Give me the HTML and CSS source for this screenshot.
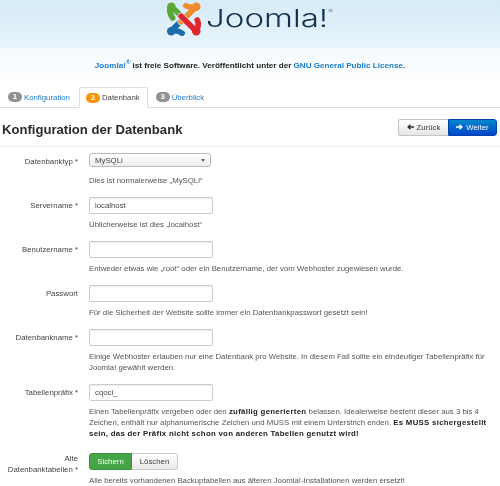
FILE: index.html
```html
<!DOCTYPE html>
<html lang="de">
<head>
    <meta charset="UTF-8">
    <meta name="viewport" content="width=device-width, initial-scale=1.0">
    <title>Joomla! Installation</title>
    <link rel="stylesheet" href="styles.css">
</head>
<body>
    <div class="header">
        <svg class="logo-icon" viewBox="0 0 36 36" width="34" height="34">
            <g fill="none" stroke-linecap="round" stroke-linejoin="round" stroke-width="6">
                <path d="M5 5 L21 21" stroke="#5aa83a"/>
                <path d="M6 17 C3 13 2 9 4 5" stroke="#5aa83a"/>
                <path d="M4 31 L21 14" stroke="#ddeef8" stroke-width="7.5"/>
                <path d="M4 31 L21 14" stroke="#1c6cab"/>
                <path d="M16 33 C12 30 8 30 4 31" stroke="#1c6cab"/>
                <path d="M31 5 L15 21" stroke="#ddeef8" stroke-width="7.5"/>
                <path d="M31 5 L15 21" stroke="#f08c2e"/>
                <path d="M20 4 C24 6 28 6 31 5" stroke="#f08c2e"/>
                <path d="M31 31 L15 15" stroke="#ddeef8" stroke-width="7.5"/>
                <path d="M31 31 L15 15" stroke="#e3262e"/>
                <path d="M32 19 C34 23 33 27 31 31" stroke="#e3262e"/>
            </g>
            <circle cx="4.5" cy="5" r="4.5" fill="#5aa83a"/>
            <circle cx="31" cy="5" r="4.5" fill="#f08c2e"/>
            <circle cx="4.5" cy="31" r="4.5" fill="#1c6cab"/>
            <circle cx="31" cy="31" r="4.5" fill="#e3262e"/>
        </svg>
        <span class="logo-text">Joomla!<sup class="logo-reg">®</sup></span>
    </div>
    <p class="license"><a href="#">Joomla!<sup>®</sup></a> ist freie Software. Veröffentlicht unter der <a href="#">GNU General Public License</a>.</p>

    <ul class="tabs">
        <li><span class="badge">1</span><a href="#">Konfiguration</a></li>
        <li class="active"><span class="badge badge-orange">2</span>Datenbank</li>
        <li><span class="badge">3</span><a href="#">Überblick</a></li>
    </ul>

    <div class="title-row">
        <h1>Konfiguration der Datenbank</h1>
        <div class="btn-group">
            <button class="btn"><svg class="arrow" viewBox="0 0 7 6" width="7" height="6"><path d="M7 3H1.5M3.5 .7 1.2 3l2.3 2.3" fill="none" stroke="#333" stroke-width="1.5"/></svg>Zurück</button>
            <button class="btn btn-blue"><svg class="arrow" viewBox="0 0 7 6" width="7" height="6"><path d="M0 3h5.5M3.5 .7 5.8 3 3.5 5.3" fill="none" stroke="#fff" stroke-width="1.5"/></svg>Weiter</button>
        </div>
    </div>

    <form class="form">
        <div class="row">
            <label>Datenbanktyp *</label>
            <div class="control">
                <div class="select"><span>MySQLi</span><i class="caret"></i></div>
                <p class="hint hint-select">Dies ist normalerweise „MySQLi“</p>
            </div>
        </div>
        <div class="row">
            <label>Servername *</label>
            <div class="control">
                <input type="text" value="localhost">
                <p class="hint">Üblicherweise ist dies „localhost“</p>
            </div>
        </div>
        <div class="row">
            <label>Benutzername *</label>
            <div class="control">
                <input type="text">
                <p class="hint">Entweder etwas wie „root“ oder ein Benutzername, der vom Webhoster zugewiesen wurde.</p>
            </div>
        </div>
        <div class="row">
            <label>Passwort</label>
            <div class="control">
                <input type="text">
                <p class="hint">Für die Sicherheit der Website sollte immer ein Datenbankpasswort gesetzt sein!</p>
            </div>
        </div>
        <div class="row">
            <label>Datenbankname *</label>
            <div class="control">
                <input type="text">
                <p class="hint">Einige Webhoster erlauben nur eine Datenbank pro Website. In diesem Fall sollte ein eindeutiger Tabellenpräfix für Joomla! gewählt werden.</p>
            </div>
        </div>
        <div class="row">
            <label>Tabellenpräfix *</label>
            <div class="control">
                <input type="text" value="cqoci_">
                <p class="hint hint-long">Einen Tabellenpräfix vergeben oder den <b>zufällig generierten</b> belassen. Idealerweise besteht dieser aus 3 bis 4 Zeichen, enthält nur alphanumerische Zeichen und MUSS mit einem Unterstrich enden. <b>Es MUSS sichergestellt sein, das der Präfix nicht schon von anderen Tabellen genutzt wird!</b></p>
            </div>
        </div>
        <div class="row">
            <label class="label-wrap">Alte Datenbanktabellen *</label>
            <div class="control">
                <div class="toggle">
                    <span class="toggle-on">Sichern</span><span class="toggle-off">Löschen</span>
                </div>
                <p class="hint">Alle bereits vorhandenen Backuptabellen aus älteren Joomla!-Installationen werden ersetzt!</p>
            </div>
        </div>
    </form>
</body>
</html>
```

FILE: styles.css
```css
html, body { height: 486px; overflow: hidden; }
body { margin: 0; font-family: "Liberation Sans", Arial, sans-serif; font-size: 7.8px; line-height: 11px; color: #444; background: #fff; filter: blur(.25px); }
a { color: #1a7cc4; text-decoration: none; }

.header { height: 48px; display: flex; justify-content: center; align-items: flex-start; padding: 0 2px 0 0; box-sizing: border-box; background: linear-gradient(#d6ebf8, #e8f4fb); }
.logo-icon { margin: 2px 5px 0 0; }
.logo-text { width: 125px; font-family: Inter, sans-serif; font-weight: 300; font-size: 24px; line-height: 38px; color: #14304f; transform: scaleX(1.38); transform-origin: left; white-space: nowrap; }
.logo-reg { font-size: 5px; line-height: 0; vertical-align: 14px; color: #555; }

.license { margin: 0; height: 39px; padding-top: 12px; box-sizing: border-box; text-align: center; font-size: 8.1px; font-weight: bold; color: #222; background: linear-gradient(#f4fafd, #fff); }
.license a { font-weight: bold; }
.license sup { font-size: 6px; line-height: 0; }

.tabs { list-style: none; margin: 0; padding: 0 0 0 8px; height: 20px; display: flex; border-bottom: 1px solid #ddd; }
.tabs li { display: flex; align-items: center; height: 20px; padding: 0 9px 0 0; }
.tabs li.active { margin: 0 8px 0 0; padding: 0 7px 0 6px; height: 21px; border: 1px solid #ddd; border-bottom-color: #fff; border-radius: 3px 3px 0 0; background: #fff; box-sizing: border-box; }
.badge { display: inline-block; width: 14px; height: 10px; line-height: 10px; margin-right: 2px; border-radius: 5px; background: #919191; color: #fff; font-size: 7.8px; font-weight: bold; text-align: center; }
.badge-orange { background: #f89406; }

.title-row { display: flex; justify-content: space-between; align-items: center; height: 39px; padding: 0 3px 0 2px; border-bottom: 1px solid #eee; box-sizing: border-box; margin-bottom: 6px; }
h1 { margin: 6px 0 0; font-size: 13.1px; line-height: 20px; color: #2a2a2a; }
.btn-group { display: flex; }
.btn { font: 7.8px/11px "Liberation Sans", Arial, sans-serif; height: 17px; width: 50px; padding: 0; border: 1px solid #c5c5c5; border-right: 0; border-radius: 3px 0 0 3px; background: linear-gradient(#fff, #e6e6e6); color: #333; }
.btn-blue { border: 1px solid #0044b0; border-radius: 0 3px 3px 0; background: linear-gradient(#0088cc, #0044cc); color: #fff; width: 49px; }
.arrow { margin-right: 3px; }

.row { display: flex; }
.row label { flex: 0 0 78px; text-align: right; margin-right: 11px; padding-top: 3px; }
.row .label-wrap { padding-top: 0; }
.control { flex: 1; padding-right: 12px; }

input { display: block; width: 124px; height: 17px; box-sizing: border-box; margin: 0; padding: 0 5px; border: 1px solid #ccc; border-radius: 2px; font: 7.8px "Liberation Sans", Arial, sans-serif; color: #444; box-shadow: inset 0 1px 1px rgba(0,0,0,.07); }
.select { display: flex; justify-content: space-between; align-items: center; width: 122px; height: 14px; box-sizing: border-box; padding: 0 5px; border: 1px solid #bbb; border-radius: 3px; background: linear-gradient(#fff, #eee); color: #444; }
.caret { width: 0; height: 0; border: 2.5px solid transparent; border-top: 3px solid #666; border-bottom: 0; }

.hint { margin: 0; padding: 5px 0 11px; color: #555; }
.hint b { color: #222; letter-spacing: .3px; }
.hint-select { padding-top: 8px; }
.hint-long { padding-bottom: 14px; }

.toggle { display: flex; height: 17px; line-height: 15px; }
.toggle span { box-sizing: border-box; text-align: center; }
.toggle-on { width: 43px; background: #46a546; color: #fff; border: 1px solid #3c8f3c; border-radius: 3px 0 0 3px; }
.toggle-off { width: 46px; border: 1px solid #ccc; border-left: 0; border-radius: 0 3px 3px 0; background: linear-gradient(#fff, #e9e9e9); color: #444; }
```
